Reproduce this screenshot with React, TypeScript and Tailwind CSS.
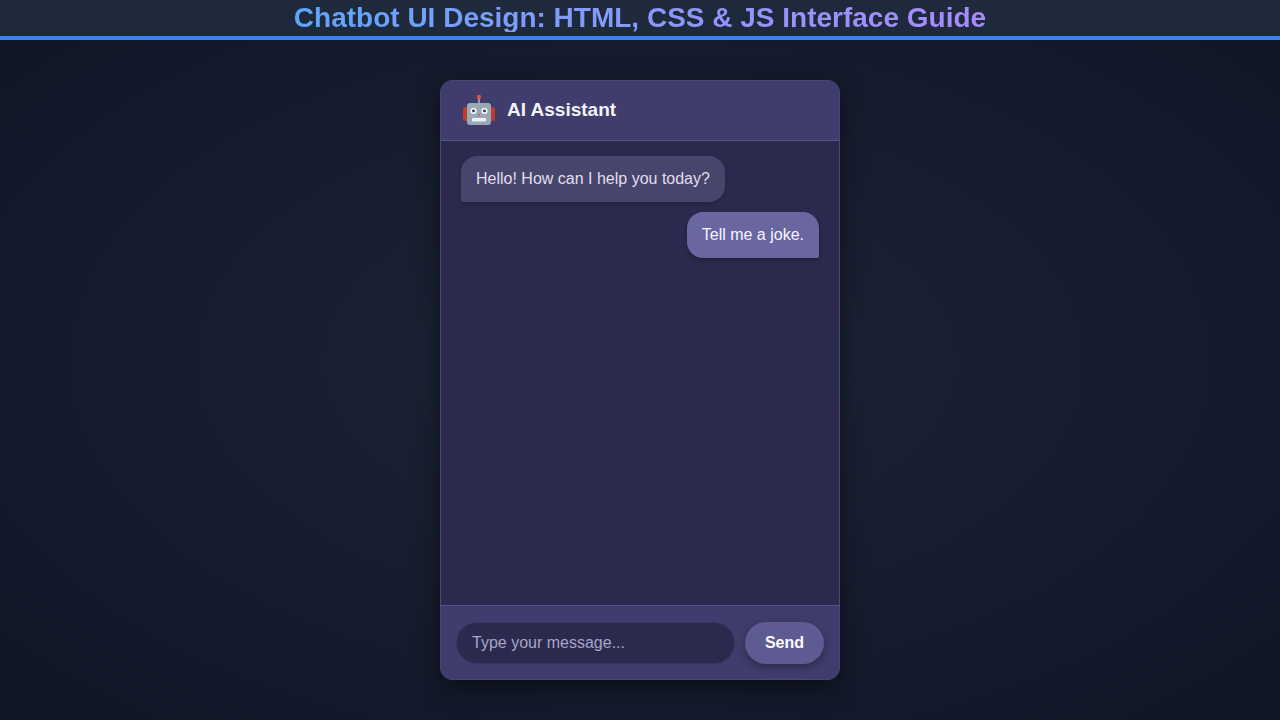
export default function App() {
  return (
    <div className="w-[1280px] h-[720px] overflow-hidden flex flex-col bg-[radial-gradient(ellipse_at_center,#1c2436_0%,#131a2b_70%,#0f1525_100%)]" style={{ fontFamily: '"Liberation Sans", Arial, sans-serif' }}>
      <div className="h-[40px] shrink-0 bg-[#1e293b] border-b-4 border-[#3b82f6] flex items-center justify-center">
        <h1 className="text-[28px] font-bold leading-none bg-gradient-to-r from-[#60a5fa] to-[#a78bfa] bg-clip-text text-transparent">Chatbot UI Design: HTML, CSS &amp; JS Interface Guide</h1>
      </div>
      <div className="flex justify-center pt-[40px]">
        <div className="w-[400px] h-[600px] rounded-[12px] overflow-hidden border border-[#4a4778] shadow-[0_8px_24px_rgba(0,0,0,0.5)] flex flex-col bg-[#2b2a4e]">
          <div className="h-[60px] shrink-0 bg-[#403d6e] border-b border-[#55528a] flex items-center px-[20px] gap-[10px]">
            <svg width="36" height="36" viewBox="0 0 36 36">
              <line x1="18" y1="3" x2="18" y2="10" stroke="#8a9aa6" strokeWidth="2" />
              <circle cx="18" cy="4" r="2.2" fill="#d9534f" />
              <rect x="2" y="14" width="5" height="14" rx="2" fill="#c0392b" />
              <rect x="29" y="14" width="5" height="14" rx="2" fill="#c0392b" />
              <rect x="6" y="10" width="24" height="22" rx="3" fill="#99aab5" />
              <circle cx="12.5" cy="18" r="3" fill="#fff" /><circle cx="12.5" cy="18" r="1.4" fill="#333" />
              <circle cx="23.5" cy="18" r="3" fill="#fff" /><circle cx="23.5" cy="18" r="1.4" fill="#333" />
              <path d="M16.5 21 L19.5 21 L18 23.5 Z" fill="#d9534f" />
              <rect x="11" y="25" width="14" height="3.5" rx="1" fill="#eef" />
            </svg>
            <span className="text-[19px] font-bold text-[#f2f2f7]">AI Assistant</span>
          </div>
          <div className="flex-1 flex flex-col gap-[10px] px-[20px] pt-[15px]">
            <div className="self-start bg-[#48456d] text-[#e0dfee] text-[16px] px-[15px] py-[11px] rounded-[16px] rounded-bl-[2px] shadow-[0_2px_4px_rgba(0,0,0,0.2)]">Hello! How can I help you today?</div>
            <div className="self-end bg-[#6a66a0] text-[#f5f5ff] text-[16px] px-[15px] py-[11px] rounded-[16px] rounded-br-[2px] shadow-[0_2px_4px_rgba(0,0,0,0.3)]">Tell me a joke.</div>
          </div>
          <div className="h-[74px] shrink-0 bg-[#403d6e] border-t border-[#55528a] flex items-center gap-[10px] px-[15px]">
            <div className="flex-1 h-[42px] rounded-full bg-[#2b2a4e] border border-[#37355e] flex items-center px-[15px] text-[16px] text-[#a7a5c8]">Type your message...</div>
            <button className="w-[79px] h-[42px] rounded-full bg-[#5e5a92] text-white font-bold text-[16px] shadow-[0_3px_8px_rgba(0,0,0,0.35)]">Send</button>
          </div>
        </div>
      </div>
    </div>
  );
}
